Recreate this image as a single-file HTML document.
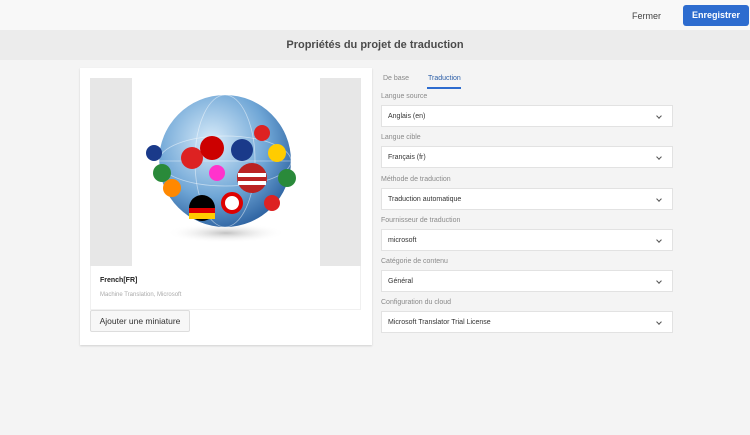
<!DOCTYPE html>
<html><head><meta charset="utf-8"><style>
*{margin:0;padding:0;box-sizing:border-box}
body{width:750px;height:435px;background:#f4f4f4;font-family:"Liberation Sans",sans-serif;position:relative;overflow:hidden}
.top{position:absolute;left:0;top:0;width:750px;height:30px;background:#f8f8f8}
.band{position:absolute;left:0;top:30px;width:750px;height:30px;background:#ececec;text-align:center;font-size:11px;color:#4b4b4b;line-height:30px;font-weight:bold}
.fermer{position:absolute;left:632px;top:11px;font-size:9px;color:#444}
.enr{position:absolute;left:683px;top:5px;width:66px;height:21px;background:#2d6ccf;border-radius:3px;color:#fff;font-size:9px;font-weight:bold;text-align:center;line-height:21px}
.card{position:absolute;left:80px;top:68px;width:292px;height:277px;background:#fff;box-shadow:0 1px 2px rgba(0,0,0,.15)}
.img{position:absolute;left:10px;top:10px;width:271px;height:188px;background:#e7e7e7}
.imgc{position:absolute;left:42px;top:0;width:188px;height:188px;background:#fff}
.info{position:absolute;left:10px;top:198px;width:271px;height:44px;border:1px solid #f0f0f0;border-top:none}
.t1{position:absolute;left:9px;top:11px;font-size:7px;font-weight:bold;color:#222}
.t2{position:absolute;left:9px;top:26px;font-size:6px;color:#aaa}
.btn{position:absolute;left:10px;top:242px;width:100px;height:22px;border:1px solid #ddd;background:#f7f7f7;border-radius:2px;font-size:8.5px;color:#333;text-align:center;line-height:21px}
.tab{position:absolute;top:75px;font-size:7px}
.ul{position:absolute;left:427px;top:87px;width:34px;height:2px;background:#2d6ccf}
.lbl{position:absolute;left:381px;font-size:7px;color:#8a8a8a}
.sel{position:absolute;left:381px;width:292px;height:22px;background:#fff;border:1px solid #e2e2e2;font-size:7px;color:#333;line-height:21px;padding-left:6px}
.sel:after{content:"";position:absolute;right:11px;top:8px;width:3px;height:3px;border-right:1px solid #555;border-bottom:1px solid #555;transform:rotate(45deg)}
</style></head><body>
<div class="top"></div>
<div class="fermer">Fermer</div>
<div class="enr">Enregistrer</div>
<div class="band">Propriétés du projet de traduction</div>
<div class="card">
 <div class="img"><div class="imgc">
  <svg width="188" height="188" viewBox="0 0 188 188">
   <defs><radialGradient id="g" cx="40%" cy="35%" r="70%"><stop offset="0" stop-color="#d9ecfa"/><stop offset="0.6" stop-color="#6fa6d6"/><stop offset="1" stop-color="#2a5f9e"/></radialGradient>
   <radialGradient id="s" cx="50%" cy="50%" r="50%"><stop offset="0" stop-color="#999" stop-opacity=".6"/><stop offset="1" stop-color="#fff" stop-opacity="0"/></radialGradient></defs>
   <ellipse cx="94" cy="155" rx="60" ry="10" fill="url(#s)"/>
   <circle cx="93" cy="83" r="66" fill="url(#g)"/>
   <g stroke="#fff" stroke-opacity=".5" fill="none" stroke-width=".8"><ellipse cx="93" cy="83" rx="30" ry="66"/><ellipse cx="93" cy="83" rx="66" ry="25"/><line x1="27" y1="83" x2="159" y2="83"/></g>
   <circle cx="60" cy="80" r="11" fill="#d22"/><circle cx="80" cy="70" r="12" fill="#c00"/><circle cx="110" cy="72" r="11" fill="#1a3a8a"/>
   <circle cx="120" cy="100" r="15" fill="#b22"/><rect x="106" y="95" width="28" height="4" fill="#fff"/><rect x="106" y="103" width="28" height="4" fill="#fff"/>
   <circle cx="70" cy="130" r="13" fill="#000"/><rect x="57" y="130" width="26" height="5" fill="#d00"/><rect x="57" y="135" width="26" height="6" fill="#fc0"/>
   <circle cx="100" cy="125" r="9" fill="#fff" stroke="#d00" stroke-width="4"/>
   <circle cx="145" cy="75" r="9" fill="#fc0"/><circle cx="155" cy="100" r="9" fill="#2a8a3a"/><circle cx="30" cy="95" r="9" fill="#2a8a3a"/>
   <circle cx="22" cy="75" r="8" fill="#1a3a8a"/><circle cx="40" cy="110" r="9" fill="#f80"/><circle cx="140" cy="125" r="8" fill="#d22"/>
   <circle cx="85" cy="95" r="8" fill="#f3c"/><circle cx="130" cy="55" r="8" fill="#d22"/>
  </svg></div></div>
 <div class="info"><div class="t1">French[FR]</div><div class="t2">Machine Translation, Microsoft</div></div>
 <div class="btn">Ajouter une miniature</div>
</div>
<div class="tab" style="left:383px;color:#888">De base</div>
<div class="tab" style="left:428px;color:#2d5fa8">Traduction</div>
<div class="ul"></div>
<div class="lbl" style="top:93px">Langue source</div><div class="sel" style="top:105px">Anglais (en)</div>
<div class="lbl" style="top:134px">Langue cible</div><div class="sel" style="top:146px">Français (fr)</div>
<div class="lbl" style="top:176px">Méthode de traduction</div><div class="sel" style="top:188px">Traduction automatique</div>
<div class="lbl" style="top:217px">Fournisseur de traduction</div><div class="sel" style="top:229px">microsoft</div>
<div class="lbl" style="top:258px">Catégorie de contenu</div><div class="sel" style="top:270px">Général</div>
<div class="lbl" style="top:299px">Configuration du cloud</div><div class="sel" style="top:311px">Microsoft Translator Trial License</div>
</body></html>
